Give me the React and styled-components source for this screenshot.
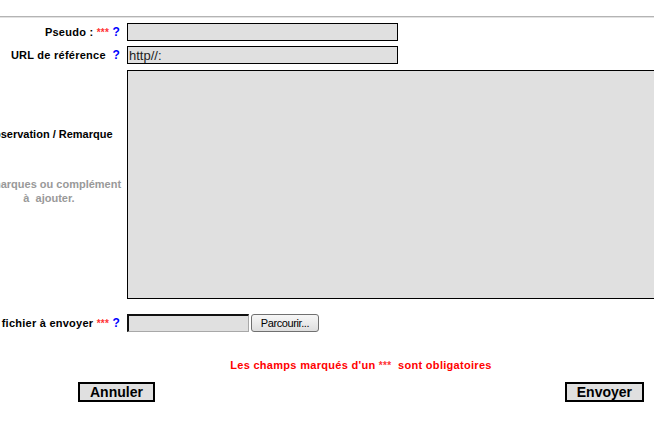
import styled, { createGlobalStyle } from "styled-components";

const GlobalStyle = createGlobalStyle`
  html, body {
    margin: 0;
    padding: 0;
    background: #fff;
    overflow: hidden;
  }
  body {
    font-family: "Liberation Sans", Arial, sans-serif;
  }
`;

const Page = styled.div`
  width: 654px;
  height: 422px;
  overflow: hidden;
  padding-top: 16px;
  box-sizing: border-box;
`;

const Rule = styled.hr`
  margin: 0;
  border: 0;
  border-top: 1px solid #b4b4b4;
  border-bottom: 1px solid #e2e2e2;
`;

const Form = styled.form`
  width: 802px;
  margin-left: -40px;
`;

const Row = styled.div`
  display: grid;
  grid-template-columns: 162px 1fr;
  column-gap: 5px;
  align-items: center;
  margin-top: ${(p) => p.$top}px;
`;

const Label = styled.label`
  font-size: 11px;
  font-weight: bold;
  letter-spacing: 0.25px;
  color: #000;
  text-align: right;
  padding-right: 2px;
  white-space: nowrap;
  line-height: 14px;
`;

const NoteLabel = styled.div`
  align-self: start;
  padding: 57px 0 0 16px;
  text-align: center;
  font-size: 11px;
  font-weight: bold;
  line-height: 14px;
  white-space: nowrap;
`;

const Hint = styled.div`
  margin-top: 36px;
  color: #999;
`;

const Required = styled.span`
  color: #ff3333;
  font-size: 10px;
`;

const Help = styled.span`
  color: #0000ff;
  font-size: 12px;
`;

const TextInput = styled.input`
  box-sizing: border-box;
  width: 271px;
  height: 18px;
  margin: 0;
  padding: 0 1px;
  border: 1px solid #000;
  background: #e0e0e0;
  font: 13px "Liberation Sans", Arial, sans-serif;
  color: #222;
  outline: none;
`;

const TextArea = styled.textarea`
  display: block;
  box-sizing: border-box;
  width: 560px;
  height: 229px;
  margin: 0;
  border: 1px solid #000;
  background: #e0e0e0;
  resize: none;
  outline: none;
`;

const FilePicker = styled.div`
  display: flex;
  align-items: center;
  gap: 2px;
`;

const FileBox = styled.div`
  box-sizing: border-box;
  width: 122px;
  height: 18px;
  background: #e0e0e0;
  border-top: 2px solid #111;
  border-left: 2px solid #111;
  border-right: 1px solid #a8a8a8;
  border-bottom: 1px solid #a8a8a8;
`;

const BrowseButton = styled.button`
  box-sizing: border-box;
  width: 68px;
  height: 18px;
  padding: 0;
  border: 1px solid #707070;
  border-radius: 3px;
  background: linear-gradient(#f7f7f7, #dedede);
  font: 11px "Liberation Sans", Arial, sans-serif;
  letter-spacing: -0.4px;
  color: #000;
`;

const Notice = styled.p`
  margin: 26px 0 0;
  text-align: center;
  font-size: 11px;
  font-weight: bold;
  letter-spacing: 0.3px;
  line-height: 14px;
  color: #ff0000;
`;

const Actions = styled.div`
  display: flex;
  justify-content: space-between;
  padding: 0 118px;
  margin-top: 9px;
`;

const Button = styled.button`
  box-sizing: border-box;
  height: 20px;
  padding: 0 10px;
  border: 2px solid #000;
  background: #e0e0e0;
  font: bold 14px "Liberation Sans", Arial, sans-serif;
  line-height: 16px;
  color: #000;
`;

export default function App() {
  return (
    <Page>
      <GlobalStyle />
      <Rule />
      <Form onSubmit={(e) => e.preventDefault()}>
        <Row $top={5}>
          <Label>
            Pseudo : <Required>***</Required> <Help>?</Help>
          </Label>
          <TextInput type="text" />
        </Row>
        <Row $top={5}>
          <Label>
            URL de référence&nbsp; <Help>?</Help>
          </Label>
          <TextInput type="text" defaultValue="http//:" />
        </Row>
        <Row $top={6}>
          <NoteLabel>
            Observation / Remarque
            <Hint>
              Remarques ou complément
              <br />
              à&nbsp; ajouter.
            </Hint>
          </NoteLabel>
          <TextArea />
        </Row>
        <Row $top={15}>
          <Label>
            Le fichier à envoyer <Required>***</Required> <Help>?</Help>
          </Label>
          <FilePicker>
            <FileBox />
            <BrowseButton type="button">Parcourir...</BrowseButton>
          </FilePicker>
        </Row>
        <Notice>
          Les champs marqués d'un <Required>***</Required>&nbsp; sont obligatoires
        </Notice>
        <Actions>
          <Button type="reset">Annuler</Button>
          <Button type="submit">Envoyer</Button>
        </Actions>
      </Form>
    </Page>
  );
}
